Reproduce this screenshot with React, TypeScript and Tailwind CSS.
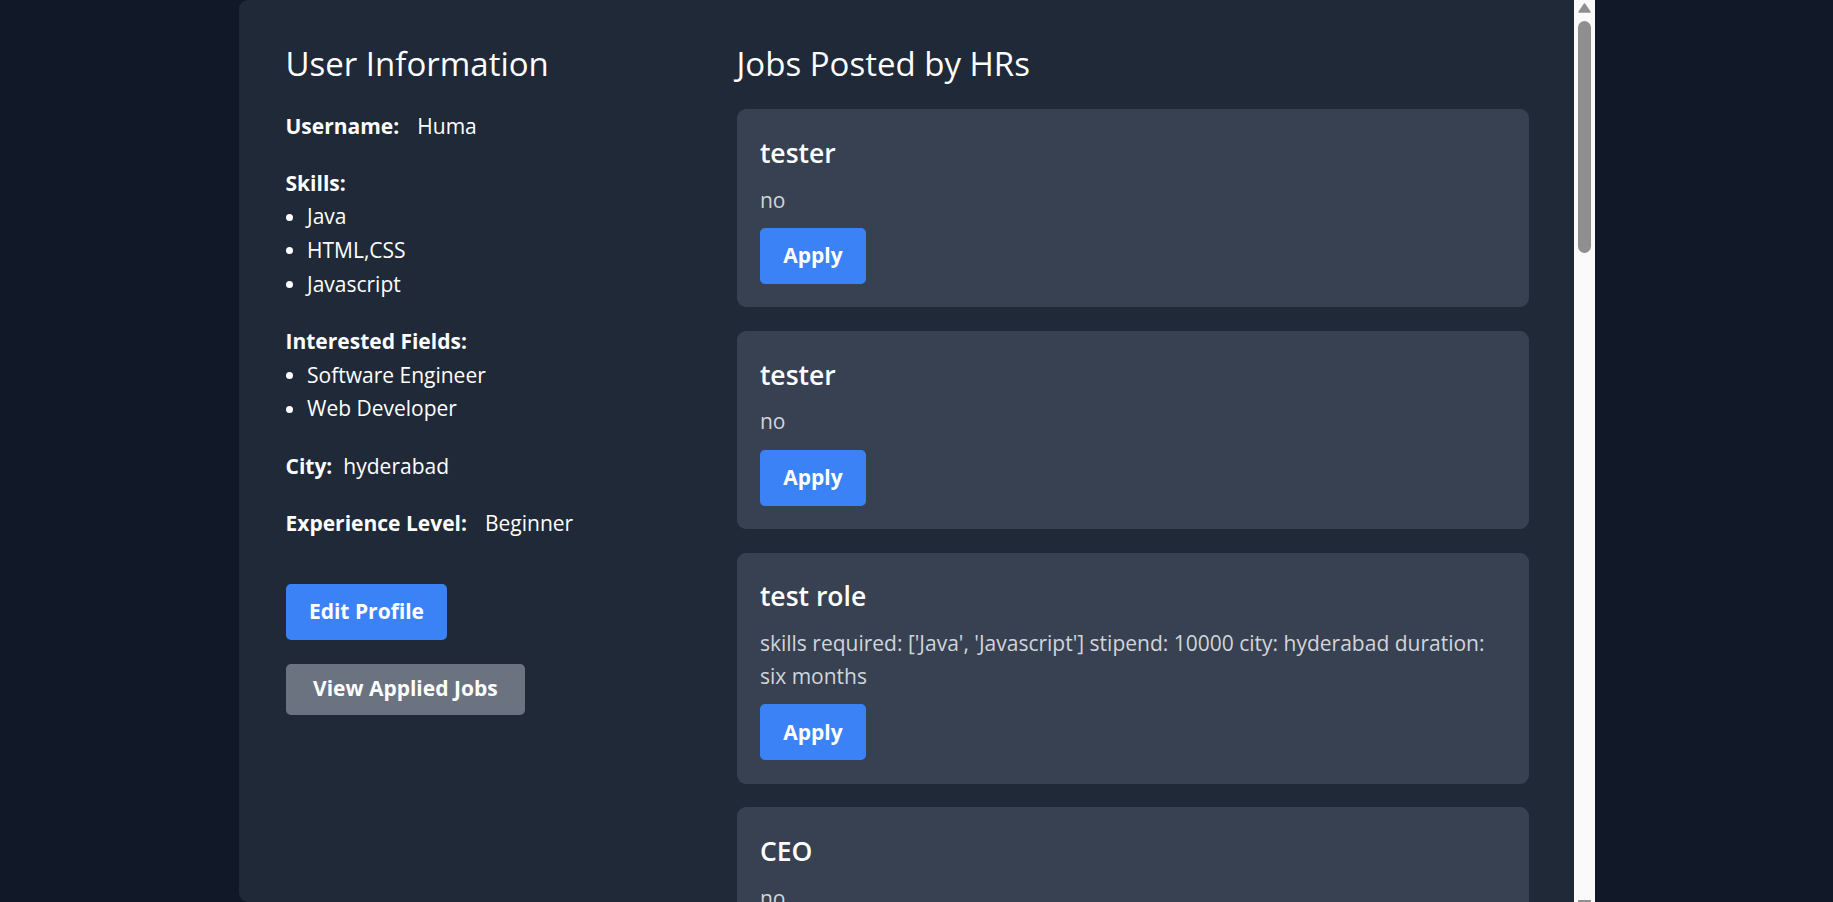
import React from 'react';

type Job = {
  title: string;
  description: string;
};

const jobs: Job[] = [
  { title: 'tester', description: 'no' },
  { title: 'tester', description: 'no' },
  {
    title: 'test role',
    description:
      "skills required: ['Java', 'Javascript'] stipend: 10000 city: hyderabad duration: six months",
  },
  { title: 'CEO', description: 'no' },
  { title: 'frontend intern', description: "skills required: ['HTML,CSS', 'Javascript'] stipend: 8000 city: hyderabad duration: three months" },
  { title: 'tester', description: 'no' },
  { title: 'developer', description: 'no' },
  { title: 'web developer', description: "skills required: ['React', 'Node'] stipend: 12000 city: bangalore duration: six months" },
  { title: 'tester', description: 'no' },
  { title: 'analyst', description: 'no' },
  { title: 'tester', description: 'no' },
  { title: 'designer', description: 'no' },
  { title: 'support', description: 'no' },
  { title: 'intern', description: 'no' },
];

const skills = ['Java', 'HTML,CSS', 'Javascript'];
const fields = ['Software Engineer', 'Web Developer'];

const BulletList = ({ items }: { items: string[] }) => (
  <ul>
    {items.map((item) => (
      <li key={item} className="flex items-center">
        <span className="ml-[0.5px] mr-[14px] h-[7px] w-[7px] shrink-0 rounded-full bg-white" />
        {item}
      </li>
    ))}
  </ul>
);

const JobCard = ({ job }: { job: Job }) => (
  <div className="rounded-[9px] bg-[#374151] px-[23.4px] pt-[25.9px] pb-[23.4px]">
    <h3 className="text-[26.5px] leading-[37.4px] font-semibold text-white">{job.title}</h3>
    <p className="mt-[11.3px] text-[21px] leading-[33px] text-[#d1d5db]">{job.description}</p>
    <button className="mt-[11.4px] rounded-[5px] bg-[#3b82f6] px-[23.4px] py-[11.4px] text-[21px] leading-[33px] font-bold text-white">
      Apply
    </button>
  </div>
);

// the page's inner scroll area shows a classic scrollbar in the reference
const FakeScrollbar = () => (
  <div className="flex w-[21px] shrink-0 flex-col items-center bg-[#fafafa]">
    <svg width="13" height="10" viewBox="0 0 13 10" className="mt-[3px]">
      <path d="M6.5 1 L12 9 L1 9 Z" fill="#8f8f8f" stroke="#8f8f8f" strokeWidth="1.4" strokeLinejoin="round" />
    </svg>
    <div className="mt-[8px] h-[232px] w-[13px] rounded-full bg-[#8f8f8f]" />
    <div className="flex-1" />
    <div className="h-[2px] w-[13px] rounded-t-[1px] bg-[#8f8f8f]" />
  </div>
);

export default function App() {
  return (
    <div className="min-h-screen bg-[#111827] font-['Open_Sans',sans-serif]">
      <div className="mx-auto flex h-screen w-[1356px] overflow-hidden rounded-l-[9px] bg-[#1f2937]">
        <div className="flex min-w-0 flex-1 gap-[37px] overflow-hidden pt-[43px] pr-[45px] pb-[47px] pl-[47px]">
          {/* left: profile */}
          <div className="w-[414px] shrink-0 text-white">
            <h2 className="mb-[24.5px] text-[33px] leading-[42px] font-medium">User Information</h2>

            <div className="flex flex-col gap-[23.5px] text-[21px] leading-[33.7px]">
              <p>
                <span className="mr-[18px] font-bold">Username:</span>Huma
              </p>
              <div>
                <p className="font-bold">Skills:</p>
                <BulletList items={skills} />
              </div>
              <div>
                <p className="font-bold">Interested Fields:</p>
                <BulletList items={fields} />
              </div>
              <p>
                <span className="mr-[11px] font-bold">City:</span>hyderabad
              </p>
              <p>
                <span className="mr-[18px] font-bold">Experience Level:</span>Beginner
              </p>
            </div>

            <div className="mt-[43px] flex flex-col items-start gap-[24px]">
              <button className="rounded-[5px] bg-[#3b82f6] px-[23.4px] py-[11.15px] text-[21px] leading-[33.7px] font-bold">
                Edit Profile
              </button>
              <button className="rounded-[5px] bg-[#6b7280] px-[27.5px] py-[8.85px] text-[21px] leading-[33.7px] font-bold">
                View Applied Jobs
              </button>
            </div>
          </div>

          {/* right: jobs */}
          <div className="min-w-0 flex-1">
            <h2 className="mb-[24px] text-[33px] leading-[42px] font-medium text-white">Jobs Posted by HRs</h2>
            <div className="flex flex-col gap-[23.6px]">
              {jobs.map((job, i) => (
                <JobCard key={i} job={job} />
              ))}
            </div>
          </div>
        </div>
        <FakeScrollbar />
      </div>
    </div>
  );
}
